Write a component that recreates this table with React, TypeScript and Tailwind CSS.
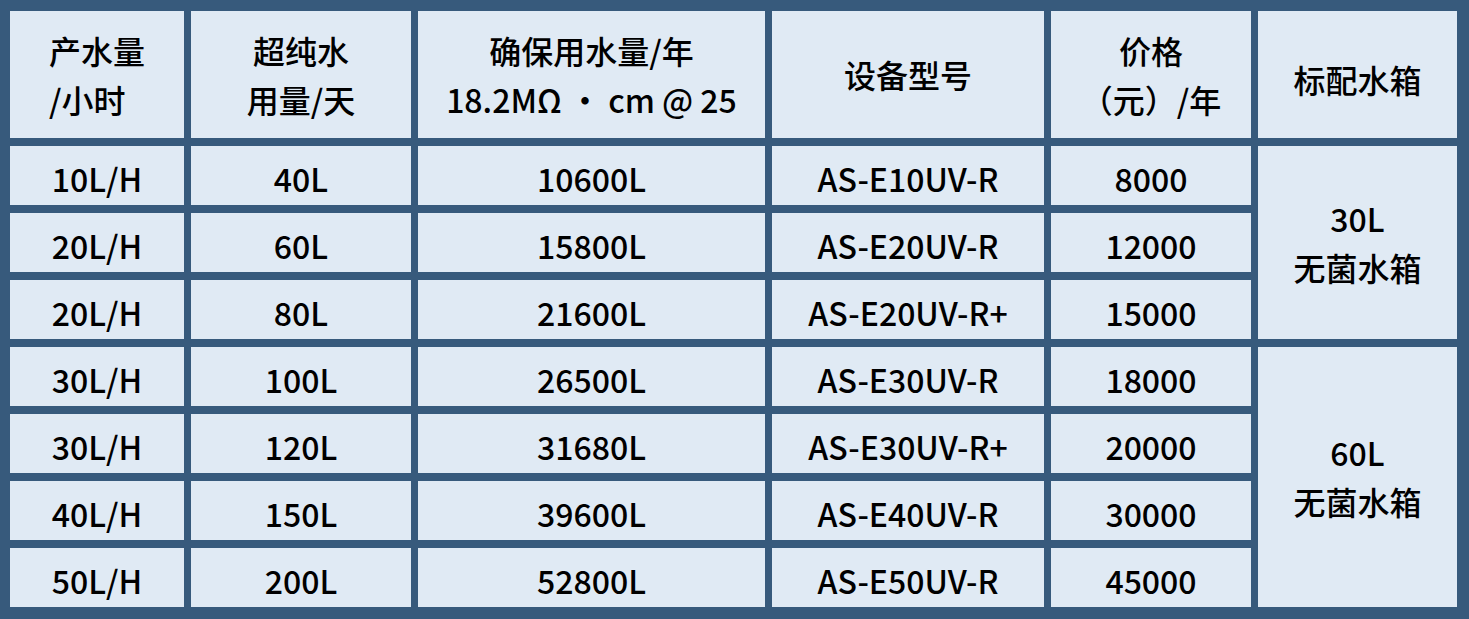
import React from 'react';

const rows = [
  ['10L/H', '40L', '10600L', 'AS-E10UV-R', '8000'],
  ['20L/H', '60L', '15800L', 'AS-E20UV-R', '12000'],
  ['20L/H', '80L', '21600L', 'AS-E20UV-R+', '15000'],
  ['30L/H', '100L', '26500L', 'AS-E30UV-R', '18000'],
  ['30L/H', '120L', '31680L', 'AS-E30UV-R+', '20000'],
  ['40L/H', '150L', '39600L', 'AS-E40UV-R', '30000'],
  ['50L/H', '200L', '52800L', 'AS-E50UV-R', '45000'],
];

function Cell({ children, className = '' }: { children: React.ReactNode; className?: string }) {
  return (
    <div className={`bg-[#e0eaf4] flex items-center justify-center text-center ${className}`}>
      {children}
    </div>
  );
}

export default function App() {
  return (
    <div
      className="w-[1469px] h-[619px] bg-[#375a7c] pt-[11px] pl-[10px] text-[32px] leading-[49px] font-medium text-black"
      style={{ fontFamily: '"Noto Sans CJK SC", "Noto Sans", sans-serif' }}
    >
      <div className="grid grid-cols-[174px_220px_347px_272px_200px_199px] grid-rows-[127px_repeat(7,59px)] gap-x-[7px] gap-y-[8px]">
        {/* header */}
        <Cell>
          <div className="text-left">
            产水量
            <br />
            /小时
          </div>
        </Cell>
        <Cell>
          <div>
            超纯水
            <br />
            用量/天
          </div>
        </Cell>
        <Cell>
          <div>
            确保用水量/年
            <br />
            18.2MΩ · cm @ 25
          </div>
        </Cell>
        <Cell>设备型号</Cell>
        <Cell>
          <div>
            价格
            <br />
            （元）/年
          </div>
        </Cell>
        <Cell className="pt-[10px]">标配水箱</Cell>

        {/* tanks */}
        <Cell className="col-start-6 row-start-2 row-span-3">
          <div>
            30L
            <br />
            无菌水箱
          </div>
        </Cell>
        <Cell className="col-start-6 row-start-5 row-span-4">
          <div>
            60L
            <br />
            无菌水箱
          </div>
        </Cell>

        {rows.map((r, i) =>
          r.map((v, j) => (
            <Cell key={`${i}-${j}`} className="pt-[6px]">
              {v}
            </Cell>
          ))
        )}
      </div>
    </div>
  );
}
